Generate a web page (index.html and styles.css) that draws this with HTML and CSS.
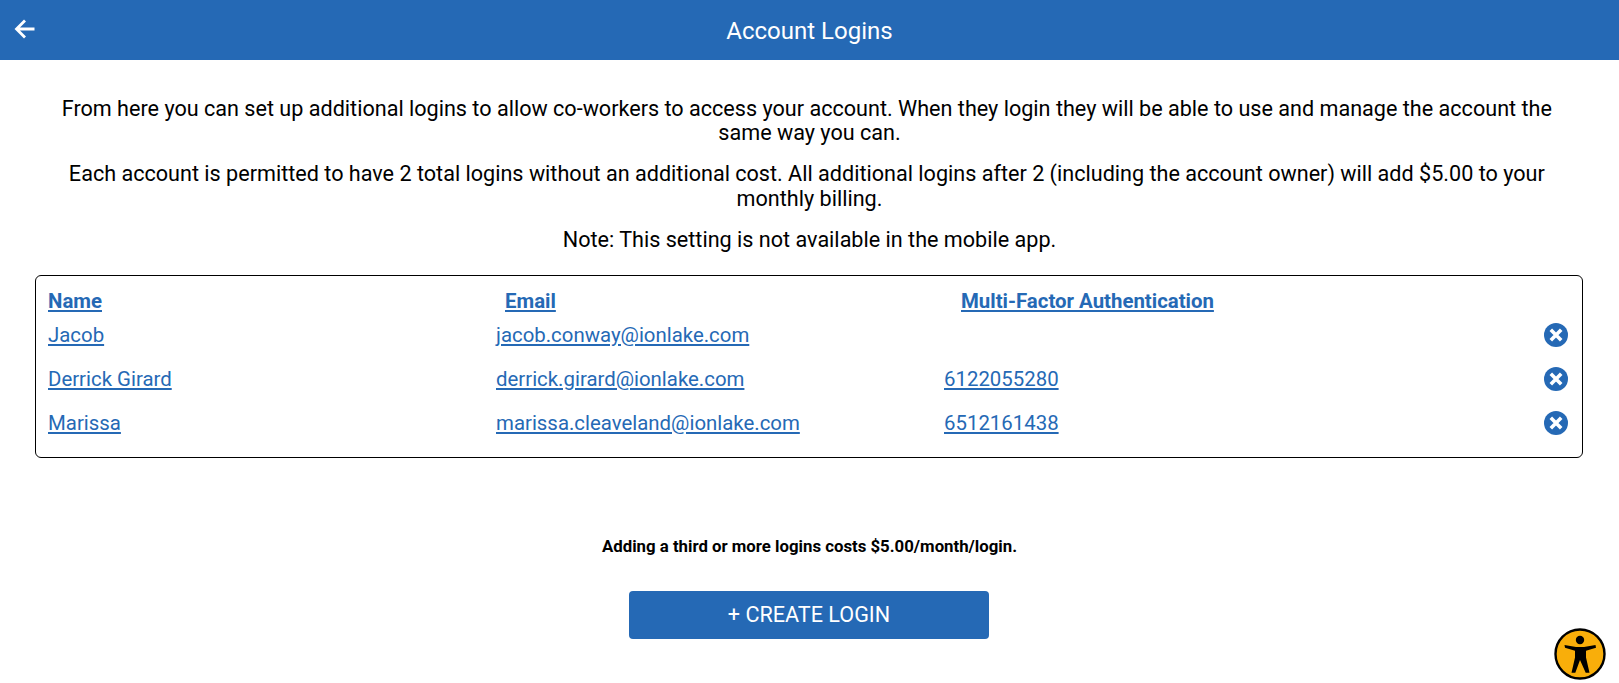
FILE: index.html
```html
<!DOCTYPE html>
<html lang="en">
<head>
  <meta charset="UTF-8" />
  <title>Account Logins</title>
  <link rel="stylesheet" href="styles.css">
</head>
<body>
  <header class="topbar">
    <a class="back" href="#">
      <svg viewBox="0 0 24 24" width="24" height="24"><path d="M21.500 12H3.500M12 3.500L3.500 12l8.500 8.500" fill="none" stroke="#fff" stroke-width="2.800"/></svg>
    </a>
    <h1>Account Logins</h1>
  </header>

  <div class="intro">
    <p>From here you can set up additional logins to allow co-workers to access your account. When they login they will be able to use and manage the account the&nbsp; same way you can.</p>
    <p>Each account is permitted to have 2 total logins without an additional cost. All additional logins after 2 (including the account owner) will add $5.00 to your&nbsp; monthly billing.</p>
    <p>Note: This setting is not available in the mobile app.</p>
  </div>

  <div class="logins">
    <div class="head-row">
      <a href="#">Name</a>
      <a href="#">Email</a>
      <a href="#">Multi-Factor Authentication</a>
    </div>
    <div class="row">
      <a href="#">Jacob</a>
      <a href="#">jacob.conway@ionlake.com</a>
      <span></span>
      <svg class="remove" viewBox="0 0 24 24" width="24" height="24"><circle cx="12" cy="12" r="12" fill="#2569b5"/><path d="M6.800 6.800l10.400 10.400M17.200 6.800L6.800 17.200" stroke="#fff" stroke-width="3.600"/></svg>
    </div>
    <div class="row">
      <a href="#">Derrick Girard</a>
      <a href="#">derrick.girard@ionlake.com</a>
      <a href="#">6122055280</a>
      <svg class="remove" viewBox="0 0 24 24" width="24" height="24"><circle cx="12" cy="12" r="12" fill="#2569b5"/><path d="M6.800 6.800l10.400 10.400M17.200 6.800L6.800 17.200" stroke="#fff" stroke-width="3.600"/></svg>
    </div>
    <div class="row">
      <a href="#">Marissa</a>
      <a href="#">marissa.cleaveland@ionlake.com</a>
      <a href="#">6512161438</a>
      <svg class="remove" viewBox="0 0 24 24" width="24" height="24"><circle cx="12" cy="12" r="12" fill="#2569b5"/><path d="M6.800 6.800l10.400 10.400M17.200 6.800L6.800 17.200" stroke="#fff" stroke-width="3.600"/></svg>
    </div>
  </div>

  <p class="cost-note">Adding a third or more logins costs $5.00/month/login.</p>
  <div class="actions">
    <button class="create">+ CREATE LOGIN</button>
  </div>

  <a class="a11y" href="#">
    <svg viewBox="0 0 52 52" width="52" height="52">
      <circle cx="26" cy="26" r="24.500" fill="#f9ae0a" stroke="#000" stroke-width="2.400"/>
      <circle cx="26" cy="12" r="4.200" fill="#000"/>
      <path d="M10.500 17l11.500 2h8l11.500-2 .5 2.800-10 3v6.700l3.500 15.200h-3.800L26 32 21.300 44.700h-3.800L21 29.500v-6.700l-10-3z" fill="#000"/>
    </svg>
  </a>
</body>
</html>
```

FILE: styles.css
```css
* {
  box-sizing: border-box;
}
body {
  margin: 0;
  background: #fff;
  color: #000;
  font-family: Roboto, sans-serif;
  font-size: 20.4px;
}
a {
  color: #2569b5;
}
.topbar {
  height: 60px;
  padding-top: 2px;
  background: #2569b5;
  display: flex;
  align-items: center;
  justify-content: center;
  position: relative;
}
.topbar h1 {
  margin: 0;
  font-size: 24px;
  font-weight: 400;
  color: #fff;
}
.back {
  position: absolute;
  left: 13px;
  top: 17px;
  display: flex;
}
.intro {
  padding: 36.5px 40px 0;
  text-align: center;
  font-size: 21.6px;
  line-height: 24.5px;
}
.intro p {
  margin: 0 0 16.5px;
}
.logins {
  margin: 22.5px 36px 0 35px;
  height: 183px;
  border: 1px solid #000;
  border-radius: 6px;
  padding: 13px 14px 12px 12px;
}
.head-row {
  display: grid;
  grid-template-columns: 457px 456px 1fr;
  font-weight: 700;
  line-height: 24px;
  margin-bottom: 5px;
}
.row {
  display: grid;
  grid-template-columns: 448px 448px 1fr 24px;
  align-items: center;
  height: 44px;
  line-height: 24px;
  padding-bottom: 10px;
}
.row a {
  justify-self: start;
}
.head-row a {
  justify-self: start;
}
.cost-note {
  margin: 78px 0 0;
  text-align: center;
  font-size: 16.8px;
  font-weight: 700;
  line-height: 20px;
}
.actions {
  display: flex;
  justify-content: center;
  margin-top: 35px;
  padding-right: 1px;
}
.create {
  width: 360px;
  height: 48px;
  background: #2569b5;
  color: #fff;
  border: none;
  border-radius: 4px;
  font-family: inherit;
  font-size: 21.6px;
}
.a11y {
  position: absolute;
  left: 1554px;
  top: 628px;
  display: flex;
}
```
